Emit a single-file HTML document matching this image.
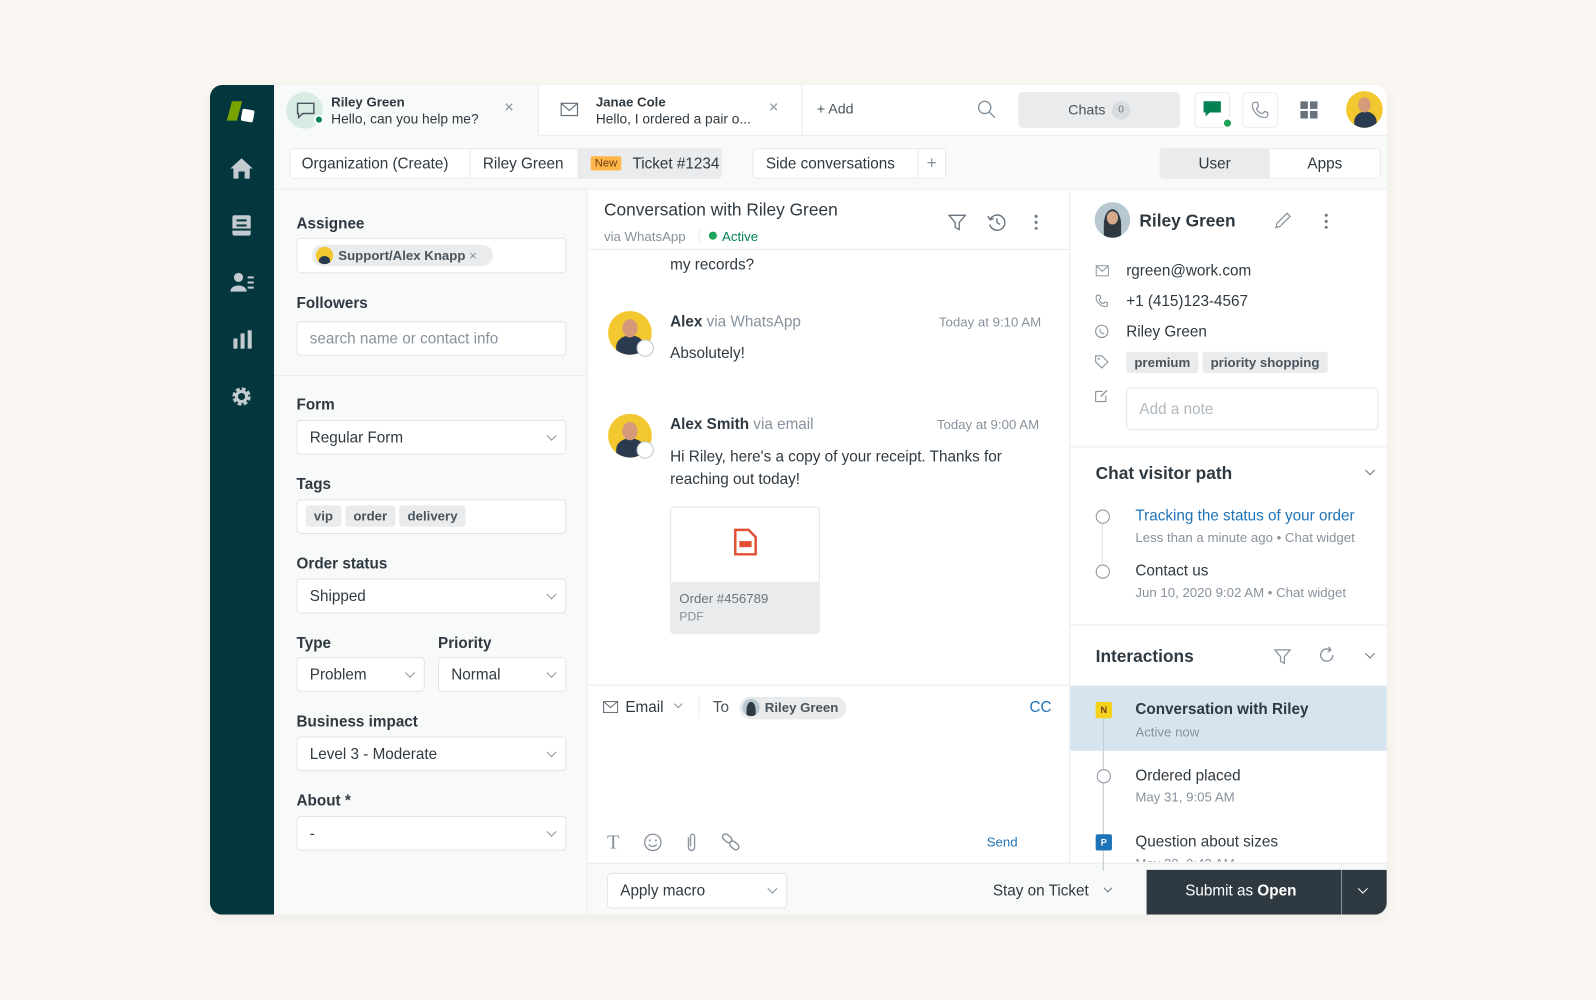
<!DOCTYPE html>
<html><head><meta charset="utf-8"><style>
*{box-sizing:border-box;margin:0;padding:0}
body{width:1596px;height:1000px;background:#fbf8f3;font-family:"Liberation Sans",sans-serif;color:#2f3941;position:relative;overflow:hidden}
.a{position:absolute}
.app{left:210px;top:84.5px;width:1156px;height:815px;background:#fff;border-radius:12px;overflow:hidden;box-shadow:0 4px 18px rgba(0,0,0,.06);transform:scale(1.018);transform-origin:0 0}
.lbl{font-size:15px;font-weight:bold;color:#2f3941}
.inp{background:#fff;border:1px solid #e2e5e8;border-radius:4px;height:34px;font-size:15px;color:#2f3941;padding:8px 12px}
.chev{position:absolute;right:10px;top:11px;width:7px;height:7px;border-right:1.3px solid #87929d;border-bottom:1.3px solid #87929d;transform:rotate(45deg)}
.tag{display:inline-block;background:#e9ebed;border-radius:3px;font-size:13px;font-weight:bold;color:#49545c;padding:3px 8px;margin-right:4px}
.g{color:#87929d}
.sm{font-size:13px}
svg{position:absolute}
</style></head><body>
<div class="a app">
 <div class="a" style="left:0;top:0;width:63px;height:815px;background:#03363d"></div>
 <div class="a" style="left:19px;top:16px;width:10px;height:19px;background:#78a300;transform:skewX(-15deg)"></div>
 <div class="a" style="left:31px;top:24px;width:12px;height:12px;background:#fff;border-radius:2px;transform:rotate(10deg)"></div>
 <svg style="left:18px;top:70px" width="26" height="24" viewBox="0 0 26 24"><path d="M13 2 L24 12 H21 V22 H16 V15 H10 V22 H5 V12 H2Z" fill="#c3cbd0"/></svg>
 <svg style="left:21px;top:127px" width="20" height="22" viewBox="0 0 20 22"><rect x="1" y="1" width="18" height="20" rx="2" fill="#c3cbd0"/><rect x="5" y="5" width="10" height="2" fill="#03363d"/><rect x="5" y="10" width="10" height="2" fill="#03363d"/><rect x="1" y="14" width="18" height="2" fill="#03363d"/></svg>
 <svg style="left:20px;top:184px" width="24" height="20" viewBox="0 0 24 20"><circle cx="8" cy="5" r="4.5" fill="#c3cbd0"/><path d="M0 19 C0 11 16 11 16 19Z" fill="#c3cbd0"/><rect x="17" y="4" width="6" height="2" fill="#c3cbd0"/><rect x="17" y="9" width="6" height="2" fill="#c3cbd0"/><rect x="17" y="14" width="6" height="2" fill="#c3cbd0"/></svg>
 <svg style="left:22px;top:240px" width="20" height="20" viewBox="0 0 20 20"><rect x="1" y="9" width="4" height="10" fill="#c3cbd0"/><rect x="8" y="4" width="4" height="15" fill="#c3cbd0"/><rect x="15" y="1" width="4" height="18" fill="#c3cbd0"/></svg>
 <svg style="left:20px;top:295px" width="22" height="22" viewBox="0 0 22 22"><circle cx="11" cy="11" r="7" fill="none" stroke="#c3cbd0" stroke-width="4" stroke-dasharray="3.5 2"/><circle cx="11" cy="11" r="5" fill="none" stroke="#c3cbd0" stroke-width="3"/></svg>

 <div class="a" style="left:63px;top:0;width:1093px;height:50px;background:#fff;border-bottom:1px solid #e9ebed"></div>
 <div class="a" style="left:63px;top:0;width:259px;height:50px;background:#f8f9f9"></div>
 <div class="a" style="left:75px;top:7px;width:36px;height:36px;border-radius:50%;background:#d8ece4"></div>
 <svg style="left:84px;top:16px" width="20" height="18" viewBox="0 0 20 18"><path d="M2 2 H18 V12 H7 L3 16 V12 H2Z" fill="none" stroke="#49545c" stroke-width="1.4"/></svg>
 <div class="a" style="left:102px;top:29px;width:10px;height:10px;border-radius:50%;background:#038153;border:2px solid #fff"></div>
 <div class="a" style="left:119px;top:9px;font-size:13px;font-weight:bold">Riley Green</div>
 <div class="a" style="left:119px;top:26px;font-size:13.5px">Hello, can you help me?</div>
 <div class="a g" style="left:289px;top:14px;font-size:16px">×</div>
 <div class="a" style="left:322px;top:0;width:1px;height:50px;background:#e9ebed"></div>
 <svg style="left:344px;top:17px" width="18" height="14" viewBox="0 0 18 14"><rect x="1" y="1" width="16" height="12" fill="none" stroke="#68737d" stroke-width="1.2"/><path d="M1 1 L9 8 L17 1" fill="none" stroke="#68737d" stroke-width="1.2"/></svg>
 <div class="a" style="left:379px;top:9px;font-size:13px;font-weight:bold">Janae Cole</div>
 <div class="a" style="left:379px;top:26px;font-size:13.5px">Hello, I ordered a pair o...</div>
 <div class="a g" style="left:549px;top:14px;font-size:16px">×</div>
 <div class="a" style="left:581px;top:0;width:1px;height:50px;background:#e9ebed"></div>
 <div class="a" style="left:596px;top:15px;font-size:14px;color:#49545c">+ Add</div>
 <svg style="left:753px;top:14px" width="20" height="20" viewBox="0 0 20 20"><circle cx="8" cy="8" r="6" fill="none" stroke="#87929d" stroke-width="1.4"/><path d="M12.5 12.5 L18 18" stroke="#87929d" stroke-width="1.4"/></svg>
 <div class="a" style="left:794px;top:7px;width:159px;height:35px;background:#e9ebed;border-radius:4px"></div>
 <div class="a" style="left:843px;top:16px;font-size:14px;color:#49545c">Chats</div>
 <div class="a" style="left:886px;top:16px;width:18px;height:18px;border-radius:50%;background:#d8dcde;font-size:10px;text-align:center;line-height:18px;color:#68737d">0</div>
 <div class="a" style="left:967px;top:7px;width:35px;height:35px;border:1px solid #e9ebed;border-radius:4px"></div>
 <svg style="left:975px;top:15px" width="19" height="18" viewBox="0 0 19 18"><path d="M1 1 H18 V12 H7 L3 16 V12 H1Z" fill="#038153"/></svg>
 <div class="a" style="left:994px;top:32px;width:11px;height:11px;border-radius:50%;background:#1fa35a;border:2px solid #fff"></div>
 <div class="a" style="left:1014px;top:7px;width:35px;height:35px;border:1px solid #e9ebed;border-radius:4px"></div>
 <svg style="left:1022px;top:15px" width="19" height="19" viewBox="0 0 19 19"><path d="M4 2 L7 2 L8 6 L6 8 C7 11 9 13 12 13 L14 11 L17 12 V15 C17 16 16 17 14 17 C8 17 2 11 2 5 C2 3 3 2 4 2Z" fill="none" stroke="#87929d" stroke-width="1.2"/></svg>
 <svg style="left:1071px;top:16px" width="17" height="17" viewBox="0 0 17 17"><rect x="0" y="0" width="7.5" height="7.5" fill="#68737d"/><rect x="9.5" y="0" width="7.5" height="7.5" fill="#68737d"/><rect x="0" y="9.5" width="7.5" height="7.5" fill="#68737d"/><rect x="9.5" y="9.5" width="7.5" height="7.5" fill="#68737d"/></svg>
 <div class="a" style="left:1116px;top:6px;width:36px;height:36px;border-radius:50%;background:#f3c72f;overflow:hidden"><div class="a" style="left:8px;top:20px;width:22px;height:20px;border-radius:50% 50% 0 0;background:#2a3b4f"></div><div class="a" style="left:12px;top:6px;width:12px;height:15px;border-radius:50%;background:#d49a7a"></div></div>

 <div class="a" style="left:63px;top:50px;width:1093px;height:53px;background:#f8f9f9;border-bottom:1px solid #e9ebed"></div>
 <div class="a" style="left:78px;top:62px;width:425px;height:30px;background:#fff;border:1px solid #e9ebed;border-radius:4px"></div>
 <div class="a" style="left:361px;top:62px;width:142px;height:30px;background:#e9ebed;border-radius:0 4px 4px 0"></div>
 <div class="a" style="left:255px;top:62px;width:1px;height:30px;background:#e9ebed"></div>
 <div class="a" style="left:90px;top:69px;font-size:15px">Organization (Create)</div>
 <div class="a" style="left:268px;top:69px;font-size:15px">Riley Green</div>
 <div class="a" style="left:374px;top:70px;font-size:11px;background:#ffb648;color:#703b15;padding:1px 4px;border-radius:2px">New</div>
 <div class="a" style="left:415px;top:69px;font-size:15px">Ticket #1234</div>
 <div class="a" style="left:533px;top:62px;width:190px;height:30px;background:#fff;border:1px solid #e9ebed;border-radius:4px"></div>
 <div class="a" style="left:695px;top:62px;width:1px;height:30px;background:#e9ebed"></div>
 <div class="a" style="left:546px;top:69px;font-size:15px">Side conversations</div>
 <div class="a g" style="left:704px;top:67px;font-size:17px">+</div>
 <div class="a" style="left:933px;top:62px;width:217px;height:30px;background:#fff;border:1px solid #e9ebed;border-radius:4px"></div>
 <div class="a" style="left:933px;top:62px;width:108px;height:30px;background:#e9ebed;border-radius:4px 0 0 4px"></div>
 <div class="a" style="left:971px;top:69px;font-size:15px">User</div>
 <div class="a" style="left:1078px;top:69px;font-size:15px">Apps</div>

 <div class="a" style="left:63px;top:103px;width:308px;height:712px;background:#f8f9f9;border-right:1px solid #e9ebed"></div>
 <div class="a lbl" style="left:85px;top:128px">Assignee</div>
 <div class="a inp" style="left:85px;top:150px;width:265px;height:35px"></div>
 <div class="a" style="left:100px;top:157px;width:178px;height:21px;background:#e9ebed;border-radius:11px"></div>
 <div class="a" style="left:104px;top:159px;width:17px;height:17px;border-radius:50%;background:#f3c72f;overflow:hidden"><div class="a" style="left:3px;top:9px;width:11px;height:9px;border-radius:50% 50% 0 0;background:#2a3b4f"></div></div>
 <div class="a" style="left:126px;top:160px;font-size:13px;font-weight:bold;color:#49545c">Support/Alex Knapp <span style="font-weight:normal;color:#87929d">×</span></div>
 <div class="a lbl" style="left:85px;top:206px">Followers</div>
 <div class="a inp" style="left:85px;top:232px;width:265px;color:#87929d">search name or contact info</div>
 <div class="a" style="left:63px;top:285px;width:308px;height:1px;background:#e9ebed"></div>
 <div class="a lbl" style="left:85px;top:306px">Form</div>
 <div class="a inp" style="left:85px;top:329px;width:265px">Regular Form<i class="chev"></i></div>
 <div class="a lbl" style="left:85px;top:384px">Tags</div>
 <div class="a inp" style="left:85px;top:407px;width:265px;padding:5px 8px"><span class="tag">vip</span><span class="tag">order</span><span class="tag">delivery</span></div>
 <div class="a lbl" style="left:85px;top:462px">Order status</div>
 <div class="a inp" style="left:85px;top:485px;width:265px">Shipped<i class="chev"></i></div>
 <div class="a lbl" style="left:85px;top:540px">Type</div>
 <div class="a inp" style="left:85px;top:562px;width:126px">Problem<i class="chev"></i></div>
 <div class="a lbl" style="left:224px;top:540px">Priority</div>
 <div class="a inp" style="left:224px;top:562px;width:126px">Normal<i class="chev"></i></div>
 <div class="a lbl" style="left:85px;top:617px">Business impact</div>
 <div class="a inp" style="left:85px;top:640px;width:265px">Level 3 - Moderate<i class="chev"></i></div>
 <div class="a lbl" style="left:85px;top:695px">About *</div>
 <div class="a inp" style="left:85px;top:718px;width:265px">-<i class="chev"></i></div>

 <div class="a" style="left:387px;top:113px;font-size:17px;color:#2f3941">Conversation with Riley Green</div>
 <div class="a g sm" style="left:387px;top:141px">via WhatsApp</div>
 <div class="a" style="left:480px;top:141px;width:1px;height:14px;background:#e9ebed"></div>
 <div class="a" style="left:490px;top:144px;width:8px;height:8px;border-radius:50%;background:#1fa35a"></div>
 <div class="a sm" style="left:503px;top:141px;color:#038153">Active</div>
 <svg style="left:725px;top:126px" width="18" height="18" viewBox="0 0 18 18"><path d="M1 2 H17 L11 9 V16 L7 14 V9Z" fill="none" stroke="#68737d" stroke-width="1.3"/></svg>
 <svg style="left:763px;top:125px" width="20" height="20" viewBox="0 0 20 20"><path d="M3.5 7 A7.5 7.5 0 1 1 3 12" fill="none" stroke="#68737d" stroke-width="1.4"/><path d="M1 4 L3.5 7.5 L7 6" fill="none" stroke="#68737d" stroke-width="1.4"/><path d="M10 6 V10 L13 12" fill="none" stroke="#68737d" stroke-width="1.4"/></svg>
 <div class="a" style="left:810px;top:126px;width:3px;height:16px;background:radial-gradient(circle,#68737d 1.4px,transparent 1.6px) 0 0/3px 6px"></div>
 <div class="a" style="left:371px;top:161px;width:473px;height:1px;background:#e9ebed"></div>
 <div class="a" style="left:452px;top:168px;font-size:15px">my records?</div>

 <div class="a" style="left:391px;top:222px;width:43px;height:43px;border-radius:50%;background:#f3c72f;overflow:hidden"><div class="a" style="left:8px;top:24px;width:28px;height:22px;border-radius:50% 50% 0 0;background:#2a3b4f"></div><div class="a" style="left:14px;top:8px;width:15px;height:18px;border-radius:50%;background:#d49a7a"></div></div>
 <div class="a" style="left:419px;top:250px;width:17px;height:17px;border-radius:50%;background:#fff;border:1px solid #c2c8cc"></div>
 <div class="a" style="left:452px;top:224px;font-size:15px"><b>Alex</b> <span class="g">via WhatsApp</span></div>
 <div class="a g sm" style="left:716px;top:225px">Today at 9:10 AM</div>
 <div class="a" style="left:452px;top:255px;font-size:15px">Absolutely!</div>

 <div class="a" style="left:391px;top:323px;width:43px;height:43px;border-radius:50%;background:#f3c72f;overflow:hidden"><div class="a" style="left:8px;top:24px;width:28px;height:22px;border-radius:50% 50% 0 0;background:#2a3b4f"></div><div class="a" style="left:14px;top:8px;width:15px;height:18px;border-radius:50%;background:#d49a7a"></div></div>
 <div class="a" style="left:419px;top:350px;width:17px;height:17px;border-radius:50%;background:#fff;border:1px solid #c2c8cc"></div>
 <div class="a" style="left:452px;top:325px;font-size:15px"><b>Alex Smith</b> <span class="g">via email</span></div>
 <div class="a g sm" style="left:714px;top:326px">Today at 9:00 AM</div>
 <div class="a" style="left:452px;top:355px;font-size:15px;line-height:22px;width:370px">Hi Riley, here's a copy of your receipt. Thanks for reaching out today!</div>
 <div class="a" style="left:452px;top:414px;width:147px;height:125px;border:1px solid #e2e5e8;border-radius:3px;overflow:hidden;background:#fff">
  <div class="a" style="left:0;top:73px;width:147px;height:52px;background:#e9ebed"></div>
  <div class="a sm" style="left:8px;top:82px;color:#68737d">Order #456789</div>
  <div class="a" style="left:8px;top:100px;font-size:12px;color:#87929d">PDF</div>
 </div>
 <svg style="left:514px;top:435px" width="24" height="28" viewBox="0 0 24 28"><path d="M2 2 H15 L22 9 V26 H2Z" fill="none" stroke="#e34f32" stroke-width="2.4"/><rect x="6" y="13" width="12" height="6" fill="#e34f32"/></svg>

 <div class="a" style="left:371px;top:589px;width:473px;height:1px;background:#e9ebed"></div>
 <svg style="left:386px;top:605px" width="15" height="12" viewBox="0 0 15 12"><rect x=".6" y=".6" width="13.8" height="10.8" fill="none" stroke="#68737d" stroke-width="1.1"/><path d="M.6 .6 L7.5 6.5 L14.4 .6" fill="none" stroke="#68737d" stroke-width="1.1"/></svg>
 <div class="a" style="left:408px;top:603px;font-size:15px">Email</div>
 <div class="a" style="left:457px;top:605px;width:6px;height:6px;border-right:1.2px solid #87929d;border-bottom:1.2px solid #87929d;transform:rotate(45deg)"></div>
 <div class="a" style="left:480px;top:600px;width:1px;height:22px;background:#e9ebed"></div>
 <div class="a" style="left:494px;top:603px;font-size:15px;color:#49545c">To</div>
 <div class="a" style="left:520px;top:601px;width:105px;height:22px;background:#e9ebed;border-radius:11px"></div>
 <div class="a" style="left:523px;top:603px;width:17px;height:17px;border-radius:50%;background:#b8c8d0;overflow:hidden"><div class="a" style="left:4px;top:3px;width:9px;height:16px;border-radius:50% 50% 0 0;background:#2f3941"></div></div>
 <div class="a sm" style="left:545px;top:604px;font-weight:bold;color:#49545c">Riley Green</div>
 <div class="a" style="left:805px;top:603px;font-size:15px;color:#1f73b7">CC</div>
 <div class="a" style="left:390px;top:733px;font-size:20px;color:#87929d;font-family:'Liberation Serif',serif">T</div>
 <svg style="left:425px;top:734px" width="20" height="20" viewBox="0 0 20 20"><circle cx="10" cy="10" r="8" fill="none" stroke="#87929d" stroke-width="1.3"/><circle cx="7" cy="8" r="1" fill="#87929d"/><circle cx="13" cy="8" r="1" fill="#87929d"/><path d="M6 12 Q10 16 14 12" fill="none" stroke="#87929d" stroke-width="1.3"/></svg>
 <svg style="left:467px;top:734px" width="12" height="20" viewBox="0 0 12 20"><path d="M3 5 V15 A3 3 0 0 0 9 15 V4 A2 2 0 0 0 5 4 V14" fill="none" stroke="#87929d" stroke-width="1.3"/></svg>
 <svg style="left:502px;top:734px" width="20" height="20" viewBox="0 0 20 20"><rect x="1" y="3" width="10" height="6" rx="3" transform="rotate(40 6 6)" fill="none" stroke="#87929d" stroke-width="1.4"/><rect x="8" y="10" width="10" height="6" rx="3" transform="rotate(40 13 13)" fill="none" stroke="#87929d" stroke-width="1.4"/></svg>
 <div class="a sm" style="left:763px;top:736px;color:#1f73b7">Send</div>

 <div class="a" style="left:371px;top:764px;width:785px;height:51px;background:#f8f9f9;border-top:1px solid #e9ebed"></div>
 <div class="a inp" style="left:390px;top:774px;width:177px;height:35px">Apply macro<i class="chev"></i></div>
 <div class="a" style="left:769px;top:783px;font-size:15px">Stay on Ticket</div>
 <div class="a" style="left:879px;top:786px;width:6px;height:6px;border-right:1.2px solid #68737d;border-bottom:1.2px solid #68737d;transform:rotate(45deg)"></div>
 <div class="a" style="left:920px;top:771px;width:236px;height:44px;background:#2f3941"></div>
 <div class="a" style="left:1111px;top:771px;width:1px;height:44px;background:#87929d"></div>
 <div class="a" style="left:958px;top:783px;font-size:15px;color:#fff">Submit as <b>Open</b></div>
 <div class="a" style="left:1129px;top:786px;width:7px;height:7px;border-right:1.4px solid #fff;border-bottom:1.4px solid #fff;transform:rotate(45deg)"></div>

 <div class="a" style="left:844px;top:103px;width:1px;height:661px;background:#e9ebed"></div>
 <div class="a" style="left:869px;top:115px;width:35px;height:35px;border-radius:50%;background:#b8c8d0;overflow:hidden"><div class="a" style="left:9px;top:7px;width:17px;height:30px;border-radius:50% 50% 0 0;background:#2f3941"></div><div class="a" style="left:12px;top:9px;width:11px;height:13px;border-radius:50%;background:#d9a98c"></div></div>
 <div class="a" style="left:913px;top:124px;font-size:17px;font-weight:bold">Riley Green</div>
 <svg style="left:1045px;top:124px" width="18" height="18" viewBox="0 0 18 18"><path d="M2 16 L3 12 L13 2 L16 5 L6 15Z" fill="none" stroke="#87929d" stroke-width="1.2"/></svg>
 <div class="a" style="left:1095px;top:125px;width:3px;height:16px;background:radial-gradient(circle,#68737d 1.4px,transparent 1.6px) 0 0/3px 6px"></div>
 <svg style="left:870px;top:177px" width="13" height="11" viewBox="0 0 13 11"><rect x=".5" y=".5" width="12" height="10" fill="none" stroke="#87929d"/><path d="M.5 .5 L6.5 6 L12.5 .5" fill="none" stroke="#87929d"/></svg>
 <div class="a" style="left:900px;top:174px;font-size:15px">rgreen@work.com</div>
 <svg style="left:869px;top:205px" width="14" height="14" viewBox="0 0 19 19"><path d="M4 2 L7 2 L8 6 L6 8 C7 11 9 13 12 13 L14 11 L17 12 V15 C17 16 16 17 14 17 C8 17 2 11 2 5 C2 3 3 2 4 2Z" fill="none" stroke="#87929d" stroke-width="1.4"/></svg>
 <div class="a" style="left:900px;top:204px;font-size:15px">+1 (415)123-4567</div>
 <svg style="left:869px;top:235px" width="14" height="14" viewBox="0 0 14 14"><circle cx="7" cy="7" r="6" fill="none" stroke="#87929d" stroke-width="1.1"/><path d="M5 4.5 Q5 9 9.5 9.5" fill="none" stroke="#87929d"/></svg>
 <div class="a" style="left:900px;top:234px;font-size:15px">Riley Green</div>
 <svg style="left:869px;top:265px" width="14" height="14" viewBox="0 0 14 14"><path d="M1 1 H7 L13 7 L7 13 L1 7Z" fill="none" stroke="#87929d" stroke-width="1.1"/><circle cx="4" cy="4" r="1" fill="#87929d"/></svg>
 <div class="a" style="left:900px;top:262px"><span class="tag">premium</span><span class="tag">priority shopping</span></div>
 <svg style="left:869px;top:298px" width="14" height="14" viewBox="0 0 14 14"><path d="M1 3 H8 M1 3 V13 H11 V7" fill="none" stroke="#87929d" stroke-width="1.1"/><path d="M6 8 L12 2" stroke="#87929d" stroke-width="1.3"/></svg>
 <div class="a inp" style="left:900px;top:297px;width:248px;height:42px;padding-top:12px;color:#b0b8be">Add a note</div>
 <div class="a" style="left:845px;top:355px;width:311px;height:1px;background:#e9ebed"></div>
 <div class="a" style="left:870px;top:372px;font-size:17px;font-weight:bold">Chat visitor path</div>
 <div class="a" style="left:1136px;top:375px;width:7px;height:7px;border-right:1.2px solid #68737d;border-bottom:1.2px solid #68737d;transform:rotate(45deg)"></div>
 <div class="a" style="left:876px;top:424px;width:1px;height:54px;background:#d8dcde"></div>
 <div class="a" style="left:870px;top:417px;width:14px;height:14px;border-radius:50%;border:1.3px solid #87929d;background:#fff"></div>
 <div class="a" style="left:870px;top:471px;width:14px;height:14px;border-radius:50%;border:1.3px solid #87929d;background:#fff"></div>
 <div class="a" style="left:909px;top:415px;font-size:15px;color:#1f73b7">Tracking the status of your order</div>
 <div class="a sm g" style="left:909px;top:437px">Less than a minute ago • Chat widget</div>
 <div class="a" style="left:909px;top:469px;font-size:15px">Contact us</div>
 <div class="a sm g" style="left:909px;top:491px">Jun 10, 2020 9:02 AM • Chat widget</div>
 <div class="a" style="left:845px;top:530px;width:311px;height:1px;background:#e9ebed"></div>
 <div class="a" style="left:870px;top:552px;font-size:17px;font-weight:bold">Interactions</div>
 <svg style="left:1045px;top:553px" width="17" height="17" viewBox="0 0 18 18"><path d="M1 2 H17 L11 9 V16 L7 14 V9Z" fill="none" stroke="#87929d" stroke-width="1.3"/></svg>
 <svg style="left:1088px;top:551px" width="18" height="18" viewBox="0 0 18 18"><path d="M15 9 A6 6 0 1 1 12 3.8" fill="none" stroke="#87929d" stroke-width="1.4"/><path d="M11 1 L13 4 L10 6" fill="none" stroke="#87929d" stroke-width="1.4"/></svg>
 <div class="a" style="left:1136px;top:555px;width:7px;height:7px;border-right:1.2px solid #68737d;border-bottom:1.2px solid #68737d;transform:rotate(45deg)"></div>
 <div class="a" style="left:845px;top:590px;width:311px;height:64px;background:#d6e4f0"></div>
 <div class="a" style="left:877px;top:612px;width:1px;height:160px;background:#c2c8cc"></div>
 <div class="a" style="left:870px;top:606px;width:16px;height:16px;background:#f5d21b;border-radius:2px;font-size:9px;font-weight:bold;text-align:center;line-height:16px;color:#703b15">N</div>
 <div class="a" style="left:909px;top:605px;font-size:15px;font-weight:bold">Conversation with Riley</div>
 <div class="a sm g" style="left:909px;top:628px">Active now</div>
 <div class="a" style="left:871px;top:672px;width:14px;height:14px;border-radius:50%;border:1.3px solid #87929d;background:#fff"></div>
 <div class="a" style="left:909px;top:670px;font-size:15px">Ordered placed</div>
 <div class="a sm g" style="left:909px;top:692px">May 31, 9:05 AM</div>
 <div class="a" style="left:870px;top:736px;width:16px;height:16px;background:#1f73b7;border-radius:2px;font-size:9px;font-weight:bold;text-align:center;line-height:16px;color:#fff">P</div>
 <div class="a" style="left:909px;top:735px;font-size:15px">Question about sizes</div>
 <div class="a sm g" style="left:909px;top:757px;height:6px;overflow:hidden">May 28, 9:43 AM</div>
</div>
</body></html>
